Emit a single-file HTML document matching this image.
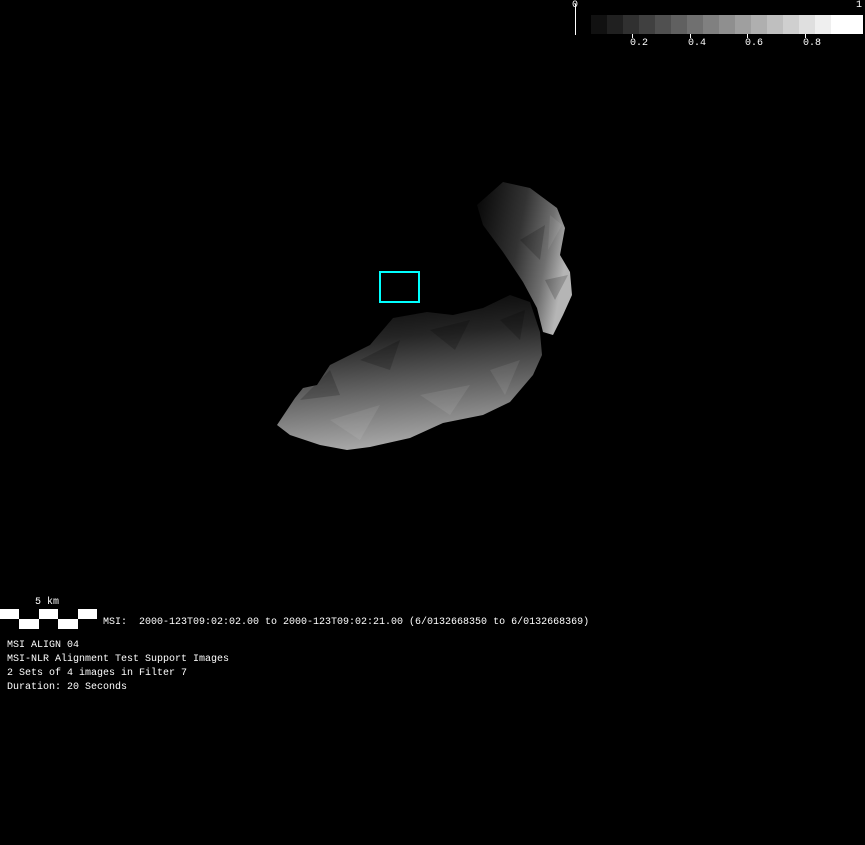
<!DOCTYPE html>
<html><head><meta charset="utf-8"><style>
html,body{margin:0;padding:0;background:#000;width:865px;height:845px;overflow:hidden}
body{position:relative;font-family:"Liberation Mono",monospace;font-size:10px;color:#fff}
.t{position:absolute;white-space:pre;line-height:12px}
</style></head><body>
<svg width="865" height="845" style="position:absolute;left:0;top:0">
<defs>
<linearGradient id="g1" x1="0.2" y1="0" x2="0.35" y2="1">
<stop offset="0" stop-color="#050505"/><stop offset="0.3" stop-color="#252525"/><stop offset="0.6" stop-color="#5e5e5e"/><stop offset="0.85" stop-color="#8e8e8e"/><stop offset="1" stop-color="#aaa"/></linearGradient>
<linearGradient id="g2" x1="0" y1="0" x2="1" y2="0.3">
<stop offset="0" stop-color="#050505"/><stop offset="0.5" stop-color="#333"/><stop offset="0.8" stop-color="#707070"/><stop offset="1" stop-color="#b5b5b5"/></linearGradient>
</defs>
<polygon fill="url(#g1)" points="277,425 295,398 303,388 317,385 330,365 370,345 393,318 427,312 453,315 483,308 510,295 530,302 540,332 542,355 533,375 510,402 483,415 443,423 410,438 370,447 347,450 320,445 290,435"/>
<polygon fill="url(#g2)" points="477,205 503,182 530,188 557,208 565,228 560,255 570,272 572,295 563,315 553,335 543,332 537,308 523,282 503,252 483,225"/>
<g fill="#000" opacity="0.18">
<polygon points="300,400 330,370 340,395"/><polygon points="360,360 400,340 390,370"/><polygon points="430,330 470,320 455,350"/><polygon points="500,320 525,310 520,340"/>
<polygon points="520,240 545,225 540,260"/><polygon points="545,280 568,275 555,300"/>
</g>
<g fill="#fff" opacity="0.08">
<polygon points="330,420 380,405 360,440"/><polygon points="420,395 470,385 450,415"/><polygon points="490,370 520,360 505,395"/><polygon points="550,215 562,225 548,250"/>
</g>
<rect x="380" y="272" width="39" height="30" fill="none" stroke="#00ffff" stroke-width="2"/>
<line x1="575.5" y1="4" x2="575.5" y2="35" stroke="#fff" stroke-width="1"/>
<g>
<rect x="591" y="15" width="16" height="19" fill="#111"/><rect x="607" y="15" width="16" height="19" fill="#202020"/><rect x="623" y="15" width="16" height="19" fill="#303030"/><rect x="639" y="15" width="16" height="19" fill="#404040"/><rect x="655" y="15" width="16" height="19" fill="#505050"/><rect x="671" y="15" width="16" height="19" fill="#606060"/><rect x="687" y="15" width="16" height="19" fill="#707070"/><rect x="703" y="15" width="16" height="19" fill="#808080"/><rect x="719" y="15" width="16" height="19" fill="#8f8f8f"/><rect x="735" y="15" width="16" height="19" fill="#9f9f9f"/><rect x="751" y="15" width="16" height="19" fill="#afafaf"/><rect x="767" y="15" width="16" height="19" fill="#bfbfbf"/><rect x="783" y="15" width="16" height="19" fill="#cfcfcf"/><rect x="799" y="15" width="16" height="19" fill="#dfdfdf"/><rect x="815" y="15" width="16" height="19" fill="#efefef"/><rect x="831" y="15" width="32" height="19" fill="#fff"/>
</g>
<g stroke="#fff"><line x1="632.5" y1="34" x2="632.5" y2="38"/><line x1="690.5" y1="34" x2="690.5" y2="38"/><line x1="747.5" y1="34" x2="747.5" y2="38"/><line x1="805.5" y1="34" x2="805.5" y2="38"/></g>
<rect x="0" y="609" width="97" height="20" fill="#fff"/>
<g fill="#000"><rect x="19" y="609" width="20" height="10"/><rect x="58" y="609" width="20" height="10"/><rect x="0" y="619" width="19" height="10"/><rect x="39" y="619" width="19" height="10"/><rect x="78" y="619" width="19" height="10"/></g>
</svg>
<div class="t" style="left:572px;top:0px">0</div>
<div class="t" style="left:856px;top:0px">1</div>
<div class="t" style="left:630px;top:38px">0.2</div>
<div class="t" style="left:688px;top:38px">0.4</div>
<div class="t" style="left:745px;top:38px">0.6</div>
<div class="t" style="left:803px;top:38px">0.8</div>
<div class="t" style="left:35px;top:597px">5 km</div>
<div class="t" style="left:103px;top:617px">MSI:  2000-123T09:02:02.00 to 2000-123T09:02:21.00 (6/0132668350 to 6/0132668369)</div>
<div class="t" style="left:7px;top:640px">MSI ALIGN 04</div>
<div class="t" style="left:7px;top:654px">MSI-NLR Alignment Test Support Images</div>
<div class="t" style="left:7px;top:668px">2 Sets of 4 images in Filter 7</div>
<div class="t" style="left:7px;top:682px">Duration: 20 Seconds</div>
</body></html>
